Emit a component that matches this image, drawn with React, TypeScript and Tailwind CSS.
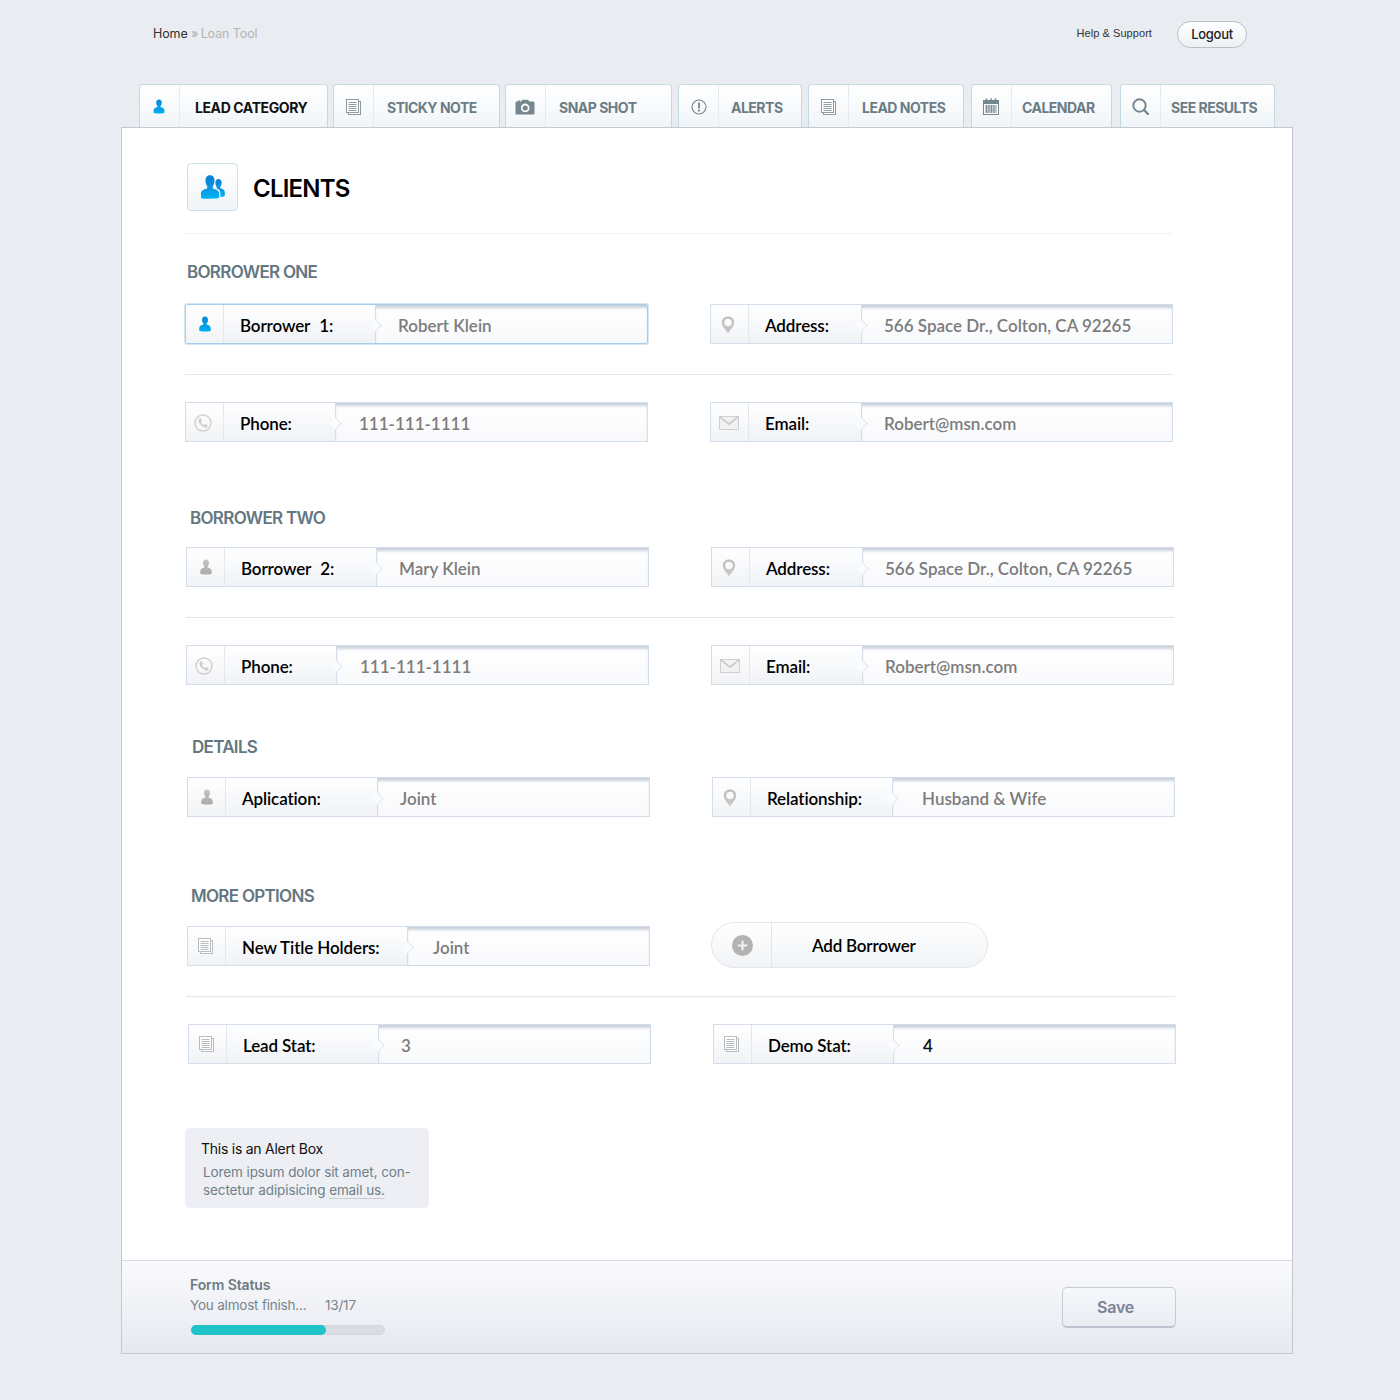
import type { ReactNode } from "react";

const UI = "font-['Inter','Open_Sans',sans-serif]";
const FIELD = "font-['Lato',sans-serif]";

const PersonIcon = ({ blue = false, className = "w-[12px] h-[16px]" }: { blue?: boolean; className?: string }) => (
  <svg viewBox="0 0 12 16" className={className}>
    <defs>
      <linearGradient id={blue ? "pb" : "pg"} x1="0" y1="0" x2="0" y2="1">
        <stop offset="0" stopColor={blue ? "#0b86d8" : "#c4c4c4"} />
        <stop offset="1" stopColor={blue ? "#00aeef" : "#aaaaaa"} />
      </linearGradient>
    </defs>
    <path
      fill={`url(#${blue ? "pb" : "pg"})`}
      d="M6 0.5C7.9 0.5 9 2 9 3.9 9 5.4 8.4 6.7 7.6 7.4V8.4C9.8 9 11.8 10 11.8 12.4V14.2C11.8 15 10.5 15.5 6 15.5S0.2 15 0.2 14.2V12.4C0.2 10 2.2 9 4.4 8.4V7.4C3.6 6.7 3 5.4 3 3.9 3 2 4.1 0.5 6 0.5Z"
    />
  </svg>
);

const PhoneIcon = () => (
  <svg viewBox="0 0 18 18" className="w-[18px] h-[18px] mr-[3px] mt-[2px]">
    <circle cx="9" cy="9" r="8" fill="none" stroke="#cfcfcf" strokeWidth="1.4" />
    <path
      fill="#cfcfcf"
      d="M5.2 4.6 6.8 4.2 8 6.8 7 7.9C7.5 9.2 8.6 10.4 10 11L11.1 10 13.7 11.2 13.3 12.9C12.9 13.7 11.8 13.9 10.9 13.6 7.9 12.7 5.1 9.9 4.4 7 4.2 6 4.5 5.1 5.2 4.6Z"
    />
  </svg>
);

const PinIcon = () => (
  <svg viewBox="0 0 14 18" className="w-[14px] h-[18px] mr-[3px] mt-[2px]">
    <defs>
      <linearGradient id="pin" x1="0" y1="0" x2="0" y2="1">
        <stop offset="0" stopColor="#bdbdbd" />
        <stop offset="1" stopColor="#c9c9c9" />
      </linearGradient>
    </defs>
    <path
      fill="url(#pin)"
      fillRule="evenodd"
      d="M7 0.5C3.4 0.5 0.8 3.1 0.8 6.5 0.8 10.3 5.2 14.6 7 17.5 8.8 14.6 13.2 10.3 13.2 6.5 13.2 3.1 10.6 0.5 7 0.5ZM7 2.7A3.8 3.8 0 1 1 7 10.3 3.8 3.8 0 1 1 7 2.7Z"
    />
  </svg>
);

const MailIcon = () => (
  <svg viewBox="0 0 20 14" className="w-[20px] h-[14px] mr-[2px] mt-[2px]">
    <rect x="0.5" y="0.5" width="19" height="13" fill="#f1f1f1" stroke="#cfcfcf" />
    <path d="M0.8 0.8 10 8 19.2 0.8" fill="none" stroke="#c4c4c4" strokeWidth="1.4" />
  </svg>
);

const DocIcon = ({ color = "#b9bcbf", className = "mr-[3px]" }: { color?: string; className?: string }) => (
  <svg viewBox="0 0 15 16" className={`w-[15px] h-[16px] ${className}`}>
    <rect x="2.5" y="2.5" width="12" height="13" fill="#fff" stroke={color} />
    <rect x="0.5" y="0.5" width="12" height="13" fill="#fff" stroke={color} />
    <path d="M2.5 3.5H10.5M2.5 5.5H10.5M2.5 7.5H10.5M2.5 9.5H10.5M2.5 11.5H10.5" stroke={color} strokeWidth="1.2" />
  </svg>
);

const CameraIcon = () => (
  <svg viewBox="0 0 20 16" className="w-[20px] h-[16px] mr-[2px] mt-[1px]">
    <path
      fill="#75868f"
      fillRule="evenodd"
      d="M2 2.5H3V1.5H5V2.5H6L7.2 0.8H13L14.3 2.5H18C19 2.5 19.5 3 19.5 4V14C19.5 15 19 15.5 18 15.5H2C1 15.5 0.5 15 0.5 14V4C0.5 3 1 2.5 2 2.5ZM10.2 4.6A4.3 4.3 0 1 0 10.2 13.2 4.3 4.3 0 1 0 10.2 4.6ZM10.2 6.4A2.5 2.5 0 1 1 10.2 11.4 2.5 2.5 0 1 1 10.2 6.4Z"
    />
  </svg>
);

const AlertIcon = () => (
  <svg viewBox="0 0 16 16" className="w-[16px] h-[16px] mt-[1px]">
    <circle cx="8" cy="8" r="7" fill="none" stroke="#75868f" strokeWidth="1.1" />
    <path d="M8 3.6V9.4" stroke="#75868f" strokeWidth="1.8" />
    <circle cx="8" cy="11.6" r="1.1" fill="#75868f" />
  </svg>
);

const CalendarIcon = () => (
  <svg viewBox="0 0 16 17" className="w-[16px] h-[17px] mr-[2px]">
    <rect x="0.5" y="2.5" width="15" height="14" fill="#fff" stroke="#75868f" />
    <rect x="0.5" y="2.5" width="15" height="3.5" fill="#75868f" />
    <path d="M3.5 0.5V3.5M8 0.5V3.5M12.5 0.5V3.5" stroke="#75868f" strokeWidth="1.6" />
    <path d="M2 8H14M2 10H14M2 12H14M2 14H14M3.5 7V15M6 7V15M8.5 7V15M11 7V15" stroke="#75868f" strokeWidth="0.9" />
  </svg>
);

const SearchIcon = () => (
  <svg viewBox="0 0 17 17" className="w-[17px] h-[17px]">
    <circle cx="7.5" cy="7.5" r="6.2" fill="none" stroke="#75868f" strokeWidth="2" />
    <path d="M12 12 16 16" stroke="#75868f" strokeWidth="2.4" strokeLinecap="round" />
  </svg>
);

const UsersIcon = () => (
  <svg viewBox="0 0 24 24" className="w-[24px] h-[24px]">
    <defs>
      <linearGradient id="ub" x1="0" y1="0" x2="0" y2="1">
        <stop offset="0" stopColor="#0a7fd4" />
        <stop offset="0.55" stopColor="#0a96e4" />
        <stop offset="1" stopColor="#00b4f4" />
      </linearGradient>
    </defs>
    <path
      fill="url(#ub)"
      d="M17.5 4C19.6 4 20.6 5.8 20.6 7.8 20.6 9.6 20 10.9 19.3 11.7V13.3C21.3 13.9 23.8 14.8 23.8 17.2V20.6C23.8 21.5 22.4 22 19.4 22.1V18.2C19.4 15.4 17.6 14.1 15.6 13.2V11.7C14.9 10.9 14.4 9.6 14.4 7.8 14.4 5.8 15.4 4 17.5 4Z"
    />
    <path
      fill="url(#ub)"
      d="M9 0.3C11.9 0.3 13.5 2.5 13.5 5.5 13.5 8.1 12.7 10 11.8 11.1V13.4C14.6 14.1 18.2 15.4 18.2 18.6V22.6C18.2 23.4 14.6 23.8 9 23.8S-0.2 23.4 -0.2 22.6V18.6C-0.2 15.4 3.4 14.1 6.2 13.4V11.1C5.3 10 4.5 8.1 4.5 5.5 4.5 2.5 6.1 0.3 9 0.3Z"
    />
  </svg>
);

const Tab = ({ icon, label, width, textClass, active = false }: { icon: ReactNode; label: string; width: string; textClass: string; active?: boolean }) => (
  <div className={`${width} h-[43px] flex rounded-t-[4px] border border-b-0 border-[#c3dae3] bg-gradient-to-b from-white to-[#f1f5f8]`}>
    <div className="w-[40px] shrink-0 flex items-center justify-center border-r border-[#e3ebef]">{icon}</div>
    <div className={`${textClass} flex items-center pt-[2px] text-[14px] font-bold whitespace-nowrap ${UI} ${active ? "text-[#111111] tracking-[-0.4px]" : "text-[#6b7c85] tracking-[-0.5px]"}`}>
      {label}
    </div>
  </div>
);

const Field = ({ icon, label, value, labelWidth, valuePad, active = false, dark = false }: { icon: ReactNode; label: ReactNode; value: string; labelWidth: string; valuePad: string; active?: boolean; dark?: boolean }) => (
  <div className={`w-[463px] h-10 flex border ${FIELD} ${active ? "border-[#a9cde8] rounded-[2px] shadow-[0_0_0_1px_#d6e7f4]" : "border-[#d3deea]"}`}>
    <div className="w-[38px] shrink-0 flex items-center justify-center border-r border-[#e3e8ee] bg-gradient-to-b from-white to-[#f1f3f6]">{icon}</div>
    <div className={`${labelWidth} shrink-0 relative flex items-center pl-[16px] pt-[2px] text-[17px] leading-none font-semibold text-black whitespace-pre border-r border-[#d3deea] bg-gradient-to-b from-white to-[#f0f2f6] tracking-[-0.12px]`}>
      {label}
      <div className="absolute top-[16px] right-[-5px] w-[9px] h-[9px] rotate-45 bg-[#fafbfc] border-t border-r border-[#dfe7ef] z-10" />
    </div>
    <div className={`flex-1 flex items-center ${valuePad} pt-[2px] text-[17px] leading-none font-semibold bg-gradient-to-b from-white to-[#f8f9fb] shadow-[inset_0_4px_3px_-1px_#cbd2dc] ${dark ? "text-[#111111]" : "text-[#7c7c7c]"}`}>
      {value}
    </div>
  </div>
);

const SectionTitle = ({ children, className }: { children: string; className: string }) => (
  <h2 className={`${className} h-5 leading-[21px] text-[17px] font-semibold tracking-[-0.7px] text-[#64767f] ${UI}`}>{children}</h2>
);

export default function App() {
  return (
    <div className="w-[1400px] h-[1400px] bg-[#e9edf2] pl-[121px]">
      <div className="h-[84px] w-[1172px] flex items-start">
        <div className={`ml-[32px] mt-[25px] text-[12.5px] leading-[17px] tracking-[-0.1px] ${UI}`}>
          <span className="text-[#333333]">Home</span>
          <span className="text-[#a8a8a8] -mr-[1px]"> » </span>
          <span className="text-[#b4b4b4]">Loan Tool</span>
        </div>
        <span className="ml-auto mt-[26px] text-[11px] leading-[14px] tracking-[0.06px] text-[#333333] font-['Liberation_Sans',sans-serif]">Help &amp; Support</span>
        <button className={`ml-[25px] mr-[46px] mt-[21px] w-[70px] h-[27px] rounded-full border border-[#b9bec9] bg-gradient-to-b from-white to-[#eef0f4] text-[13px] font-medium tracking-[-0.3px] text-[#222222] ${UI}`}>
          Logout
        </button>
      </div>

      <div className="h-[43px] ml-[18px] flex">
        <Tab width="w-[189px]" textClass="pl-[15px]" active label="LEAD CATEGORY" icon={<PersonIcon blue className="w-[12px] h-[15px] mr-[2px]" />} />
        <div className="w-[5px]" />
        <Tab width="w-[167px]" textClass="pl-[13px]" label="STICKY NOTE" icon={<DocIcon color="#8d9aa1" className="mr-[1px] mt-[1px]" />} />
        <div className="w-[5px]" />
        <Tab width="w-[167px]" textClass="pl-[13px]" label="SNAP SHOT" icon={<CameraIcon />} />
        <div className="w-[6px]" />
        <Tab width="w-[124px]" textClass="pl-[12px]" label="ALERTS" icon={<AlertIcon />} />
        <div className="w-[6px]" />
        <Tab width="w-[156px]" textClass="pl-[13px]" label="LEAD NOTES" icon={<DocIcon color="#8d9aa1" className="mr-[1px] mt-[1px]" />} />
        <div className="w-[7px]" />
        <Tab width="w-[141px]" textClass="pl-[10px]" label="CALENDAR" icon={<CalendarIcon />} />
        <div className="w-[8px]" />
        <Tab width="w-[155px]" textClass="pl-[10px]" label="SEE RESULTS" icon={<SearchIcon />} />
      </div>

      <div className="w-[1172px] h-[1227px] bg-white border border-[#c3c9d0] flex flex-col">
        <div className="pl-[63px] flex-1">
          <div className="mt-[35px] ml-[2px] flex items-center">
            <div className="w-[51px] h-[48px] rounded-[4px] border border-[#cfe0e8] bg-gradient-to-b from-white to-[#f0f4f7] flex items-center justify-center">
              <UsersIcon />
            </div>
            <h1 className={`ml-[15px] pt-[3px] text-[24px] font-semibold tracking-[-0.8px] text-black ${UI}`}>CLIENTS</h1>
          </div>
          <hr className="mt-[22px] w-[987px] border-[#eef0f2]" />

          <SectionTitle className="mt-[28px] ml-[2px]">BORROWER ONE</SectionTitle>
          <div className="mt-[22px] flex gap-[62px]">
            <Field active icon={<PersonIcon blue />} label={<>Borrower<span className="ml-[9px]">1:</span></>} value="Robert Klein" labelWidth="w-[152px]" valuePad="pl-[22px]" />
            <Field icon={<PinIcon />} label="Address:" value="566 Space Dr., Colton, CA 92265" labelWidth="w-[113px]" valuePad="pl-[22px]" />
          </div>
          <hr className="mt-[30px] w-[988px] border-[#e3e6ea]" />
          <div className="mt-[27px] flex gap-[62px]">
            <Field icon={<PhoneIcon />} label="Phone:" value="111-111-1111" labelWidth="w-[112px]" valuePad="pl-[23px]" />
            <Field icon={<MailIcon />} label="Email:" value="Robert@msn.com" labelWidth="w-[113px]" valuePad="pl-[22px]" />
          </div>

          <SectionTitle className="mt-[66px] ml-[5px]">BORROWER TWO</SectionTitle>
          <div className="mt-[19px] ml-[1px] flex gap-[62px]">
            <Field icon={<PersonIcon />} label={<>Borrower<span className="ml-[9px]">2:</span></>} value="Mary Klein" labelWidth="w-[152px]" valuePad="pl-[22px]" />
            <Field icon={<PinIcon />} label="Address:" value="566 Space Dr., Colton, CA 92265" labelWidth="w-[113px]" valuePad="pl-[22px]" />
          </div>
          <hr className="mt-[30px] ml-[1px] w-[988px] border-[#e3e6ea]" />
          <div className="mt-[27px] ml-[1px] flex gap-[62px]">
            <Field icon={<PhoneIcon />} label="Phone:" value="111-111-1111" labelWidth="w-[112px]" valuePad="pl-[23px]" />
            <Field icon={<MailIcon />} label="Email:" value="Robert@msn.com" labelWidth="w-[113px]" valuePad="pl-[22px]" />
          </div>

          <SectionTitle className="mt-[52px] ml-[7px]">DETAILS</SectionTitle>
          <div className="mt-[20px] ml-[2px] flex gap-[62px]">
            <Field icon={<PersonIcon />} label="Aplication:" value="Joint" labelWidth="w-[152px]" valuePad="pl-[22px]" />
            <Field icon={<PinIcon />} label="Relationship:" value="Husband & Wife" labelWidth="w-[142px]" valuePad="pl-[29px]" />
          </div>

          <SectionTitle className="mt-[69px] ml-[6px]">MORE OPTIONS</SectionTitle>
          <div className="mt-[20px] ml-[2px] h-10 flex">
            <Field icon={<DocIcon />} label="New Title Holders:" value="Joint" labelWidth="w-[182px]" valuePad="pl-[25px]" />
            <div className={`ml-[61px] -mt-[4px] w-[277px] h-[46px] flex rounded-full border border-[#e2e5e9] bg-gradient-to-b from-white to-[#f1f3f6] ${FIELD}`}>
              <div className="w-[60px] shrink-0 flex items-center justify-center border-r border-[#e2e5e9] pl-[2px]">
                <svg viewBox="0 0 20 20" className="w-[21px] h-[21px]">
                  <circle cx="10" cy="10" r="10" fill="#b3b3b3" />
                  <path d="M10 5.5V14.5M5.5 10H14.5" stroke="#f2f2f2" strokeWidth="2" />
                </svg>
              </div>
              <span className="pl-[40px] pt-[2px] flex items-center text-[17px] font-semibold text-black tracking-[-0.2px]">Add Borrower</span>
            </div>
          </div>
          <hr className="mt-[30px] ml-[1px] w-[989px] border-[#e3e6ea]" />
          <div className="mt-[27px] ml-[3px] flex gap-[62px]">
            <Field icon={<DocIcon />} label="Lead Stat:" value="3" labelWidth="w-[152px]" valuePad="pl-[22px]" />
            <Field dark icon={<DocIcon />} label="Demo Stat:" value="4" labelWidth="w-[142px]" valuePad="pl-[29px]" />
          </div>

          <div className={`mt-[64px] w-[244px] h-[80px] rounded-[5px] bg-[#edeff4] pl-[16px] pt-[12px] ${UI}`}>
            <p className="text-[14px] leading-[18px] text-[#111111] tracking-[-0.25px]">This is an Alert Box</p>
            <p className="mt-[5px] ml-[2px] text-[13.5px] leading-[18px] text-[#6f7f88] whitespace-nowrap tracking-[-0.1px]">
              Lorem ipsum dolor sit amet, con-
              <br />
              sectetur adipisicing <span className="border-b border-[#c8ccd3]">email us.</span>
            </p>
          </div>
        </div>

        <div className={`h-[93px] shrink-0 border-t border-[#d8dbe6] bg-gradient-to-b from-[#fafafc] to-[#e6e9f0] pl-[68px] pr-[116px] flex justify-between ${UI}`}>
          <div className="pt-[15px] w-[195px]">
            <p className="text-[14px] leading-[18px] font-semibold text-[#6c7a82] tracking-[-0.1px]">Form Status</p>
            <p className="mt-[2px] flex text-[13.5px] leading-[18px] text-[#77858d] tracking-[-0.2px]">
              <span className="w-[135px]">You almost finish...</span>
              <span>13/17</span>
            </p>
            <div className="mt-[11px] ml-[1px] h-[10px] rounded-full bg-[#d8dce5] border border-[#d2d6df]">
              <div className="-m-px w-[135px] h-[10px] rounded-full bg-[#1fc2c7]" />
            </div>
          </div>
          <button className="mt-[26px] w-[114px] h-[41px] pr-[7px] rounded-[5px] border border-[#c6ccd6] border-b-2 border-b-[#bcc3cf] bg-gradient-to-b from-[#f5f7fb] to-[#e9edf2] text-[16px] font-semibold text-[#7a8296] tracking-[-0.2px]">
            Save
          </button>
        </div>
      </div>
    </div>
  );
}
